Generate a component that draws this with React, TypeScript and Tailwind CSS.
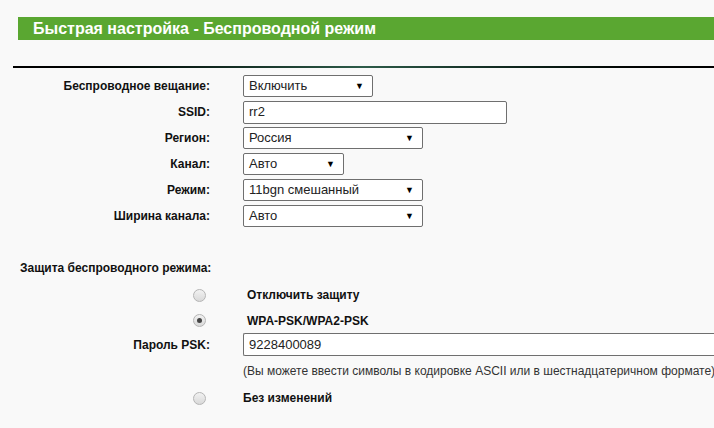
const font = { fontFamily: '"Liberation Sans", Arial, sans-serif' };

function Select({ value, width }: { value: string; width: string }) {
  return (
    <div
      className={`flex h-[22px] items-center justify-between rounded-[2px] border border-[#6f6f6f] bg-white pl-[5px] pr-[8px] text-[13px] text-[#222] ${width}`}
    >
      <span>{value}</span>
      <span className="text-[9px] leading-none text-black">▼</span>
    </div>
  );
}

function Radio({ checked = false }: { checked?: boolean }) {
  return (
    <span className="flex h-[13px] w-[13px] items-center justify-center rounded-full border border-[#b5b5b5] bg-gradient-to-b from-[#f2f2f2] to-[#d9d9d9]">
      {checked && <span className="h-[5px] w-[5px] rounded-full bg-[#444]" />}
    </span>
  );
}

function Row({ label, children }: { label: string; children: React.ReactNode }) {
  return (
    <div className="flex h-[26px] items-center">
      <div className="w-[210px] text-right text-[12px] font-bold text-[#111]">{label}</div>
      <div className="ml-[33px] flex-1">{children}</div>
    </div>
  );
}

export default function App() {
  return (
    <div className="h-[428px] w-[714px] overflow-hidden bg-[#f9f9f9]" style={font}>
      <div className="pt-[17px] pl-[18px]">
        <div className="flex h-[23px] items-center bg-[#5aa731] pl-[15px] text-[16px] font-bold text-white">
          Быстрая настройка - Беспроводной режим
        </div>
      </div>

      <div className="mt-[26px] ml-[13px] h-[2px] bg-gradient-to-r from-black via-[#2e5c4a] to-black" />

      <div className="mt-[5px] flex flex-col">
        <Row label="Беспроводное вещание:">
          <Select value="Включить" width="w-[130px]" />
        </Row>
        <Row label="SSID:">
          <div className="flex h-[23px] w-[264px] items-center rounded-[2px] border border-[#6f6f6f] bg-white pl-[5px] text-[13px] text-[#222]">
            rr2
          </div>
        </Row>
        <Row label="Регион:">
          <Select value="Россия" width="w-[180px]" />
        </Row>
        <Row label="Канал:">
          <Select value="Авто" width="w-[101px]" />
        </Row>
        <Row label="Режим:">
          <Select value="11bgn смешанный" width="w-[180px]" />
        </Row>
        <Row label="Ширина канала:">
          <Select value="Авто" width="w-[180px]" />
        </Row>
      </div>

      <div className="mt-[31px] h-[16px] pl-[20px] text-[12px] leading-[16px] font-bold text-[#111]">
        Защита беспроводного режима:
      </div>

      <div className="mt-[6px] flex h-[26px] items-center">
        <div className="flex w-[210px] justify-end pr-[4px]">
          <Radio />
        </div>
        <div className="ml-[37px] text-[12px] font-bold text-[#111]">Отключить защиту</div>
      </div>
      <div className="flex h-[25px] items-center">
        <div className="flex w-[210px] justify-end pr-[4px]">
          <Radio checked />
        </div>
        <div className="ml-[37px] text-[12px] font-bold text-[#111]">WPA-PSK/WPA2-PSK</div>
      </div>
      <div className="flex h-[23px] items-center">
        <div className="w-[210px] text-right text-[12px] font-bold text-[#111]">Пароль PSK:</div>
        <div className="ml-[33px] flex h-[23px] flex-1 items-center rounded-l-[2px] border border-r-0 border-[#6f6f6f] bg-white pl-[5px] text-[13px] text-[#222]">
          9228400089
        </div>
      </div>
      <div className="mt-[8px] ml-[243px] h-[14px] whitespace-nowrap text-[12px] leading-[14px] text-[#333]">
        (Вы можете ввести символы в кодировке ASCII или в шестнадцатеричном формате)
      </div>
      <div className="mt-[7px] flex h-[26px] items-center">
        <div className="flex w-[210px] justify-end pr-[4px]">
          <Radio />
        </div>
        <div className="ml-[33px] text-[12px] font-bold text-[#111]">Без изменений</div>
      </div>
    </div>
  );
}
